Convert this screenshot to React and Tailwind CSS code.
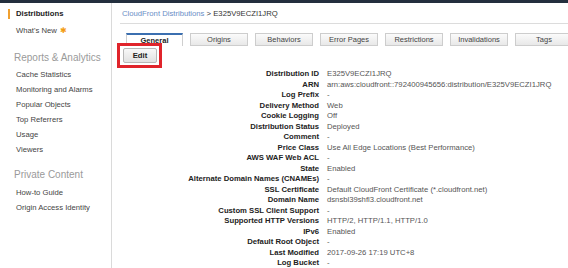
import React from "react";

const rows = [
  ["Distribution ID", "E325V9ECZI1JRQ"],
  ["ARN", "arn:aws:cloudfront::792400945656:distribution/E325V9ECZI1JRQ"],
  ["Log Prefix", "-"],
  ["Delivery Method", "Web"],
  ["Cookie Logging", "Off"],
  ["Distribution Status", "Deployed"],
  ["Comment", "-"],
  ["Price Class", "Use All Edge Locations (Best Performance)"],
  ["AWS WAF Web ACL", "-"],
  ["State", "Enabled"],
  ["Alternate Domain Names (CNAMEs)", "-"],
  ["SSL Certificate", "Default CloudFront Certificate (*.cloudfront.net)"],
  ["Domain Name", "dsnsbl39shfl3.cloudfront.net"],
  ["Custom SSL Client Support", "-"],
  ["Supported HTTP Versions", "HTTP/2, HTTP/1.1, HTTP/1.0"],
  ["IPv6", "Enabled"],
  ["Default Root Object", "-"],
  ["Last Modified", "2017-09-26 17:19 UTC+8"],
  ["Log Bucket", "-"],
];

const tabs = ["General", "Origins", "Behaviors", "Error Pages", "Restrictions", "Invalidations", "Tags"];

function SideItem({ children, className = "" }) {
  return (
    <div className={"h-[15px] flex items-center pl-[16px] text-[7.7px] text-[#444] " + className}>{children}</div>
  );
}

export default function App() {
  return (
    <div className="relative w-[568px] h-[268px] overflow-hidden bg-white font-['Liberation_Sans',Arial,sans-serif]">
      <div className="h-[3px] bg-[#232f3e]" />
      <div className="flex h-[265px]">
        {/* Sidebar */}
        <div className="w-[112px] shrink-0 border-r border-[#dadada] pt-[3px]">
          <div className="relative h-[16px] flex items-center pl-[16px] text-[7.7px] font-bold text-[#222]">
            <div className="absolute left-[8px] top-[3px] w-[2px] h-[10px] bg-[#f0a030]" />
            Distributions
          </div>
          <div className="h-[17px] flex items-center pl-[16px] text-[7.7px] text-[#444]">
            What's New <span className="ml-[3px] text-[#f39c12] text-[8px] leading-none">✱</span>
          </div>
          <div className="mt-[8px] h-[20px] flex items-center pl-[14px] text-[10px] text-[#9a9a9a]">Reports &amp; Analytics</div>
          <SideItem>Cache Statistics</SideItem>
          <SideItem>Monitoring and Alarms</SideItem>
          <SideItem>Popular Objects</SideItem>
          <SideItem>Top Referrers</SideItem>
          <SideItem>Usage</SideItem>
          <SideItem>Viewers</SideItem>
          <div className="mt-[7px] h-[20px] flex items-center pl-[14px] text-[10px] text-[#9a9a9a]">Private Content</div>
          <SideItem className="mt-[1px]">How-to Guide</SideItem>
          <SideItem>Origin Access Identity</SideItem>
        </div>

        {/* Main */}
        <div className="flex-1 pl-[8px]">
          <div className="pt-[6px] h-[21px] pl-[2px] flex items-start text-[7.7px] leading-[10px] border-b border-[#dcdcdc]">
            <span className="text-[#6a8ec6]">CloudFront Distributions</span>
            <span className="text-[#333] whitespace-pre"> &gt; E325V9ECZI1JRQ</span>
          </div>
          <div className="mt-[9px] ml-[6px] flex gap-[7px] h-[13px]">
            {tabs.map((t, i) =>
              i === 0 ? (
                <div
                  key={t}
                  className="w-[57px] h-[13px] flex items-center justify-center text-[7.5px] font-bold text-[#222] bg-white border-t-2 border-t-[#3b6fb0] border-x border-x-[#cfcfcf]"
                >
                  {t}
                </div>
              ) : (
                <div
                  key={t}
                  className="w-[58px] h-[13px] flex items-center justify-center text-[7.5px] text-[#444] bg-gradient-to-b from-[#fbfbfb] to-[#e8e8e8] border border-[#cdcdcd]"
                >
                  {t}
                </div>
              )
            )}
          </div>
          <div className="mt-[2px] ml-[3px] w-[34px] h-[15px] flex items-center justify-center text-[7.7px] font-bold text-[#222] bg-gradient-to-b from-[#f8f8f8] to-[#e2e2e2] border border-[#b8b8b8] rounded-[2px]">
            Edit
          </div>
          <div className="mt-[6px] grid grid-cols-[199px_1fr] gap-x-[8px] auto-rows-[10.5px] text-[7.7px] leading-[10.5px]">
            {rows.map(([k, v]) => (
              <React.Fragment key={k}>
                <div className="text-right font-bold text-[#222] whitespace-nowrap">{k}</div>
                <div className="text-[#555] whitespace-nowrap">{v}</div>
              </React.Fragment>
            ))}
          </div>
        </div>
      </div>
      {/* red annotation box */}
      <div className="absolute left-[117px] top-[43px] w-[45px] h-[25px] border-[3px] border-[#e0242b]" />
    </div>
  );
}
